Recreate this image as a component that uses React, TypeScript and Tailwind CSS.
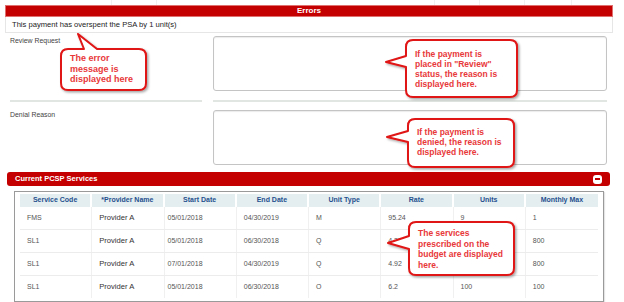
import React from "react"

const rows = [
  ["FMS", "Provider A", "05/01/2018", "04/30/2019", "M", "95.24", "9", "1"],
  ["SL1", "Provider A", "05/01/2018", "06/30/2018", "Q", "4.32", "", "800"],
  ["SL1", "Provider A", "07/01/2018", "04/30/2019", "Q", "4.92", "", "800"],
  ["SL1", "Provider A", "05/01/2018", "06/30/2018", "O", "6.2", "100", "100"],
]

const headers = [
  "Service Code",
  "*Provider Name",
  "Start Date",
  "End Date",
  "Unit Type",
  "Rate",
  "Units",
  "Monthly Max",
]

// rounded box with a tail on the left side, apex at (ax, ay), base from b1 to b2
const leftBubble = (x: number, y: number, w: number, h: number, ax: number, ay: number, b1: number, b2: number) => {
  const r = 7
  return `M ${x + r} ${y} H ${x + w - r} Q ${x + w} ${y} ${x + w} ${y + r} V ${y + h - r} Q ${x + w} ${y + h} ${x + w - r} ${y + h} H ${x + r} Q ${x} ${y + h} ${x} ${y + h - r} V ${b2} L ${ax} ${ay} L ${x} ${b1} V ${y + r} Q ${x} ${y} ${x + r} ${y} Z`
}

// tail on the top side
const topBubble = (x: number, y: number, w: number, h: number, ax: number, ay: number, t1: number, t2: number) => {
  const r = 7
  return `M ${x + r} ${y} H ${t1} L ${ax} ${ay} L ${t2} ${y} H ${x + w - r} Q ${x + w} ${y} ${x + w} ${y + r} V ${y + h - r} Q ${x + w} ${y + h} ${x + w - r} ${y + h} H ${x + r} Q ${x} ${y + h} ${x} ${y + h - r} V ${y + r} Q ${x} ${y} ${x + r} ${y} Z`
}

const Callouts = () => (
  <>
    <svg className="pointer-events-none absolute left-0 top-0" width={624} height={302}>
      <defs>
        <filter id="sh" x="-20%" y="-20%" width="140%" height="140%">
          <feDropShadow dx="1.5" dy="1.5" stdDeviation="1" floodColor="#000" floodOpacity="0.35" />
        </filter>
      </defs>
      <g fill="#fff" stroke="#e01414" strokeWidth={2} strokeLinejoin="round" filter="url(#sh)">
        <path d={topBubble(61, 49, 85, 41, 78, 34, 84, 97)} />
        <path d={leftBubble(406, 40, 111, 57, 386, 62, 56, 67)} />
        <path d={leftBubble(408, 119, 106, 48, 387, 137, 131, 142)} />
        <path d={leftBubble(409, 222, 105, 53, 388, 243, 236, 249)} />
      </g>
    </svg>
    <div className="absolute left-[70px] top-[53px] text-[9px] font-bold leading-[10.5px] text-[#e8383a]">
      The error
      <br />
      message is
      <br />
      displayed here
    </div>
    <div className="absolute left-[415px] top-[49px] text-[8.5px] font-bold leading-[10px] text-[#e8383a]">
      If the payment is
      <br />
      placed in "Review"
      <br />
      status, the reason is
      <br />
      displayed here.
    </div>
    <div className="absolute left-[417px] top-[127px] text-[8.5px] font-bold leading-[10px] text-[#e8383a]">
      If the payment is
      <br />
      denied, the reason is
      <br />
      displayed here.
    </div>
    <div className="absolute left-[418px] top-[228px] text-[8.5px] font-bold leading-[10.5px] text-[#e8383a]">
      The services
      <br />
      prescribed on the
      <br />
      budget are displayed
      <br />
      here.
    </div>
  </>
)

const App = () => {
  return (
    <div className="relative h-[302px] w-[624px] overflow-hidden bg-white font-['Liberation_Sans',Arial,sans-serif] text-[#333]">
      {/* faint strip of the table above */}
      <div className="flex h-[5px]">
        <div className="w-[112px] border-r border-[#f0f0f0]" />
        <div className="w-[45px] border-r border-[#f0f0f0]" />
        <div className="w-[278px] border-r border-[#f0f0f0]" />
        <div className="w-[45px] border-r border-[#f0f0f0]" />
        <div className="w-[45px] border-r border-[#f0f0f0]" />
        <div className="w-[47px] border-r border-[#f0f0f0]" />
      </div>

      {/* errors panel */}
      <div className="ml-[5px] w-[608px]">
        <div className="flex h-[12px] items-center justify-center border border-[#e07070] bg-[#c40000] text-[8px] font-bold text-white">
          Errors
        </div>
        <div className="flex h-[16px] items-center border-x border-b border-[#e6e6e6] pl-[6px] text-[7.6px] text-[#222]">
          This payment has overspent the PSA by 1 unit(s)
        </div>
      </div>

      {/* review / denial */}
      <div className="mt-[3px] flex gap-[11px] pl-[10px]">
        <div className="w-[192px] pt-[1px] text-[6.9px] leading-[8px] text-[#444]">Review Request</div>
        <div className="h-[55px] w-[394px] rounded-[3px] border border-[#c4c4c4] shadow-[inset_0_1px_1px_rgba(0,0,0,0.08)]" />
      </div>
      <div className="mt-[9px] flex gap-[11px] pl-[10px]">
        <div className="h-[2px] w-[192px] bg-[#e2e6e2]" />
        <div className="h-[2px] w-[394px] bg-[#e2e6e2]" />
      </div>
      <div className="mt-[8px] flex gap-[11px] pl-[10px]">
        <div className="w-[192px] pt-[1px] text-[6.9px] leading-[8px] text-[#444]">Denial Reason</div>
        <div className="h-[55px] w-[394px] rounded-[3px] border border-[#c4c4c4] shadow-[inset_0_1px_1px_rgba(0,0,0,0.08)]" />
      </div>

      {/* current PCSP services */}
      <div className="ml-[7px] mt-[7px] flex h-[14px] w-[603px] items-center justify-between rounded-[3px] bg-[#c40000] pl-[8px] pr-[8px]">
        <span className="text-[7.5px] font-bold text-white">Current PCSP Services</span>
        <div className="flex h-[9px] w-[9px] items-center justify-center rounded-[3px] bg-white">
          <div className="h-[2px] w-[5px] bg-[#c40000]" />
        </div>
      </div>

      <div className="ml-[14px] mt-[5px] w-[590px] border border-[#9a9a9a] px-[5px] pb-[3px] pt-[2px] shadow-[1px_1px_1px_rgba(0,0,0,0.1)]">
        <div className="grid grid-cols-8 bg-[#e4eef0]">
          {headers.map((h, i) => (
            <div
              key={h}
              className={`flex h-[13px] items-center justify-center text-[7px] font-bold text-[#24508e] ${i < 7 ? "border-r-2 border-white" : ""}`}
            >
              {h}
            </div>
          ))}
        </div>
        {rows.map((row, r) => (
          <div key={r} className={`grid grid-cols-8 ${r < 3 ? "border-b border-[#ececec]" : ""}`}>
            {row.map((c, i) => (
              <div
                key={i}
                className={`flex h-[22px] items-center ${i === 2 ? "pl-[3px]" : "pl-[7px]"} ${i === 1 ? "text-[7.6px] text-[#333]" : "text-[7px] text-[#555]"} ${i < 7 ? "border-r border-[#f0f0f0]" : ""}`}
              >
                {c}
              </div>
            ))}
          </div>
        ))}
      </div>

      <Callouts />
    </div>
  )
}

export default App
